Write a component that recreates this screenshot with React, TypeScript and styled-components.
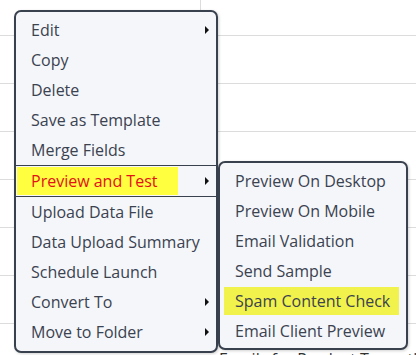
import React from "react";
import styled, { createGlobalStyle } from "styled-components";

const GlobalStyle = createGlobalStyle`
  html, body { margin: 0; padding: 0; background: #fff; }
  body { font-family: "Open Sans", "Noto Sans", sans-serif; }
`;

const Page = styled.div`
  position: relative;
  width: 416px;
  height: 355px;
  overflow: hidden;
  background: #fff;
`;

const Table = styled.div`
  display: flex;
  flex-direction: column;
`;

const HeadRow = styled.div`
  display: grid;
  grid-template-columns: 201px 1fr;
  height: 35px;
  border-bottom: 1px solid #dcdcdc;
`;

const HeadCell = styled.div<{ $divider?: boolean }>`
  border-right: ${(p) => (p.$divider ? "1px solid #dcdcdc" : "none")};
`;

const Row = styled.div`
  height: 47px;
  border-bottom: 1px solid #dcdcdc;
  box-sizing: content-box;
`;

const TextRow = styled.div`
  height: 47px;
  padding: 24px 0 0 219px;
  box-sizing: border-box;
  font-size: 16px;
  line-height: 22px;
  color: #333;
  white-space: nowrap;
`;

const Menu = styled.div<{ $left: number; $top: number; $width: number; $height: number }>`
  position: absolute;
  left: ${(p) => p.$left}px;
  top: ${(p) => p.$top}px;
  width: ${(p) => p.$width}px;
  height: ${(p) => p.$height}px;
  box-sizing: border-box;
  border: 2px solid #3a414e;
  border-radius: 7px;
  background: #f4f6fa;
  padding-top: 3px;
  display: flex;
  flex-direction: column;
  box-shadow: 1px 1px 3px rgba(0, 0, 0, 0.18);
`;

const Item = styled.div<{ $active?: boolean }>`
  position: relative;
  display: flex;
  align-items: center;
  height: 30px;
  flex: none;
  font-size: 16px;
  color: ${(p) => (p.$active ? "#e3101a" : "#3b4250")};
  border-top: ${(p) => (p.$active ? "1px solid #3a414e" : "none")};
  border-bottom: ${(p) => (p.$active ? "1px solid #3a414e" : "none")};
  white-space: nowrap;
`;

const Label = styled.span<{ $pad: number; $mark?: string; $markWidth?: number; $inset: number }>`
  display: flex;
  align-items: center;
  box-sizing: border-box;
  margin-left: ${(p) => p.$inset}px;
  padding-left: ${(p) => p.$pad}px;
  height: 28px;
  width: ${(p) => (p.$markWidth ? `${p.$markWidth}px` : "auto")};
  background: ${(p) => p.$mark ?? "transparent"};
`;

const Arrow = styled.span`
  position: absolute;
  right: 7px;
  top: 50%;
  margin-top: -4px;
  width: 0;
  height: 0;
  border-left: 4px solid #111;
  border-top: 4px solid transparent;
  border-bottom: 4px solid transparent;
`;

type Entry = { label: string; sub?: boolean; active?: boolean; mark?: boolean };

const mainItems: Entry[] = [
  { label: "Edit", sub: true },
  { label: "Copy" },
  { label: "Delete" },
  { label: "Save as Template" },
  { label: "Merge Fields" },
  { label: "Preview and Test", sub: true, active: true, mark: true },
  { label: "Upload Data File" },
  { label: "Data Upload Summary" },
  { label: "Schedule Launch" },
  { label: "Convert To", sub: true },
  { label: "Move to Folder", sub: true },
];

const subItems: Entry[] = [
  { label: "Preview On Desktop" },
  { label: "Preview On Mobile" },
  { label: "Email Validation" },
  { label: "Send Sample" },
  { label: "Spam Content Check", mark: true },
  { label: "Email Client Preview" },
];

export default function App() {
  return (
    <>
      <GlobalStyle />
      <Page>
        <Table>
          <HeadRow>
            <HeadCell $divider />
            <HeadCell />
          </HeadRow>
          <Row />
          <Row />
          <Row />
          <Row />
          <Row />
          <Row />
          <TextRow>Emails for Product Types that</TextRow>
        </Table>

        <Menu $left={14} $top={10} $width={204} $height={343}>
          {mainItems.map((it) => (
            <Item key={it.label} $active={it.active}>
              {it.mark ? (
                <Label $inset={1} $pad={14} $mark="#ffff40" $markWidth={161}>
                  {it.label}
                </Label>
              ) : (
                <Label $inset={0} $pad={15}>{it.label}</Label>
              )}
              {it.sub && <Arrow />}
            </Item>
          ))}
        </Menu>

        <Menu $left={218} $top={161} $width={190} $height={189}>
          {subItems.map((it) => (
            <Item key={it.label}>
              {it.mark ? (
                <Label $inset={4} $pad={11} $mark="#f2f24c" $markWidth={175}>
                  {it.label}
                </Label>
              ) : (
                <Label $inset={0} $pad={15}>{it.label}</Label>
              )}
            </Item>
          ))}
        </Menu>
      </Page>
    </>
  );
}
